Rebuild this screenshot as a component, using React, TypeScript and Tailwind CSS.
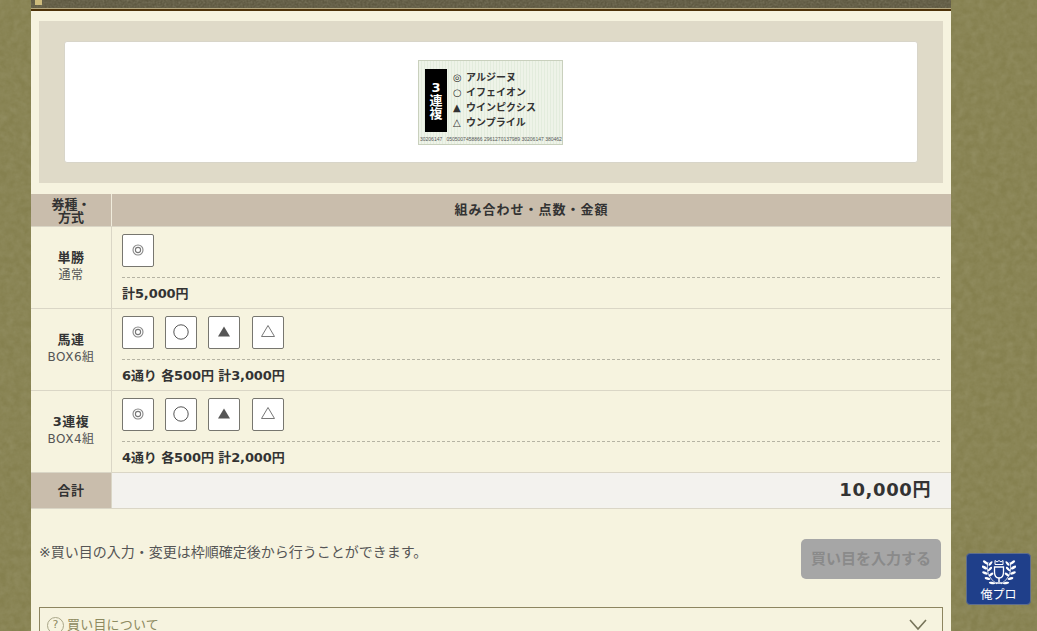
import React from "react";

const font = "font-['DejaVu_Sans','Noto_Sans_CJK_JP',sans-serif]";

const Mark = ({ type }: { type: string }) => {
  return (
    <div className="flex h-[33px] w-[32px] items-center justify-center rounded-[2px] border border-[#77766f] bg-white last:not-first:ml-[1px]">
      <svg width="20" height="20" viewBox="0 0 20 20" className="mb-[2px]">
        {type === "double" && (
          <>
            <circle cx="10" cy="10" r="5" fill="none" stroke="#888" strokeWidth="1.1" />
            <circle cx="10" cy="10" r="2.6" fill="none" stroke="#777" strokeWidth="1.1" />
          </>
        )}
        {type === "circle" && <circle cx="10" cy="10" r="7.2" fill="none" stroke="#555" strokeWidth="1" />}
        {type === "black" && <polygon points="10,4.5 16,14.5 4,14.5" fill="#555" />}
        {type === "tri" && <polygon points="10,3.5 16.5,14.5 3.5,14.5" fill="none" stroke="#777" strokeWidth="1" />}
      </svg>
    </div>
  );
};

const Row = ({ name, sub, marks, total }: { name: string; sub: string; marks: string[]; total: string }) => {
  return (
    <div className="flex h-[82px] border-b border-[#dad6c6]">
      <div className="flex w-[81px] shrink-0 flex-col items-center justify-center border-r border-[#dad6c6] pb-[6px]">
        <p className="text-[13px] leading-[20px] font-bold tracking-[0.5px] text-[#333]">{name}</p>
        <p className="text-[12px] leading-[14px] tracking-[0.5px] text-[#555]">{sub}</p>
      </div>
      <div className="flex-1 pt-[7px] pr-[11px] pl-[10px]">
        <div className="flex h-[44px] gap-[11px] border-b border-dashed border-[#b5b3a3]">
          {marks.map((m, i) => (
            <Mark key={i} type={m} />
          ))}
        </div>
        <p className="mt-[6px] text-[13px] leading-[20px] font-bold tracking-[-0.1px] text-[#333]">{total}</p>
      </div>
    </div>
  );
};

const Ticket = () => {
  const horses = [
    ["◎", "アルジーヌ"],
    ["○", "イフェイオン"],
    ["▲", "ウインピクシス"],
    ["△", "ウンプライル"],
  ];
  return (
    <div className="flex h-[85px] w-[145px] flex-col border border-[#c9d0bd] bg-[repeating-linear-gradient(90deg,#eef3e8_0px,#eef3e8_2px,#e3ecdd_2px,#e3ecdd_3px)] pt-[8px]">
      <div className="flex flex-1 pl-[6px]">
        <div className="flex h-[63px] w-[22px] flex-col items-center justify-center bg-black text-[13px] leading-[13px] font-bold text-white">
          <span>3</span>
          <span>連</span>
          <span>複</span>
        </div>
        <div className="ml-[6px] flex flex-col pt-[1px]">
          {horses.map(([m, n]) => (
            <div key={n} className="flex h-[15px] items-center text-[10px] font-bold whitespace-nowrap text-[#333]">
              <span className="w-[13px] text-[10px] font-normal">{m}</span>
              <span>{n}</span>
            </div>
          ))}
        </div>
      </div>
      <p className="pb-[1px] pl-[1px] font-['Liberation_Sans',sans-serif] text-[5px] leading-[7px] whitespace-nowrap text-[#555]">
        30206147 &nbsp; 0505007458866 2961270137989 30206147 380462
      </p>
    </div>
  );
};

const Leaves = () => {
  return (
    <g>
      <path d="M6 2c-2 8 0 16 9 22" fill="none" stroke="#fff" strokeWidth="0.8" />
      <ellipse cx="3.5" cy="2.5" rx="3" ry="1.3" fill="#fff" transform="rotate(35 3.5 2.5)" />
      <ellipse cx="8.5" cy="3.5" rx="2.8" ry="1.2" fill="#fff" transform="rotate(-50 8.5 3.5)" />
      <ellipse cx="2.5" cy="7.5" rx="3" ry="1.3" fill="#fff" transform="rotate(30 2.5 7.5)" />
      <ellipse cx="8" cy="9" rx="2.8" ry="1.2" fill="#fff" transform="rotate(-45 8 9)" />
      <ellipse cx="3" cy="13" rx="3" ry="1.3" fill="#fff" transform="rotate(20 3 13)" />
      <ellipse cx="9" cy="14.5" rx="2.8" ry="1.2" fill="#fff" transform="rotate(-35 9 14.5)" />
      <ellipse cx="5.5" cy="18.5" rx="3" ry="1.3" fill="#fff" transform="rotate(15 5.5 18.5)" />
      <ellipse cx="10" cy="23" rx="3.2" ry="1.2" fill="#fff" transform="rotate(10 10 23)" />
    </g>
  );
};

const Trophy = () => {
  return (
    <svg width="34" height="26" viewBox="0 0 34 26">
      <Leaves />
      <g transform="matrix(-1 0 0 1 34 0)">
        <Leaves />
      </g>
      <path d="M13 4.5V0.5l2 1.5 2-1.5 2 1.5 2-1.5v4z" fill="none" stroke="#fff" strokeWidth="1" />
      <path d="M12.5 7h9v5c0 4-2 6-4.5 6s-4.5-2-4.5-6z" fill="none" stroke="#fff" strokeWidth="1.3" />
      <path d="M17 18v4" stroke="#fff" strokeWidth="1.5" />
      <path d="M13.5 23h7" stroke="#fff" strokeWidth="1.5" />
    </svg>
  );
};

export default function App() {
  const all = ["double", "circle", "black", "tri"];
  return (
    <div className={`relative h-[631px] overflow-hidden bg-[#85804f] ${font}`}>
      <svg className="absolute inset-0 h-full w-full opacity-40">
        <filter id="bgnoise">
          <feTurbulence type="fractalNoise" baseFrequency="0.14" numOctaves="3" seed="4" />
          <feColorMatrix values="0 0 0 0 0.38  0 0 0 0 0.36  0 0 0 0 0.2  0.9 0.9 0 0 -0.55" />
        </filter>
        <rect width="100%" height="100%" filter="url(#bgnoise)" />
      </svg>
      <div className="relative ml-[31px] w-[920px]">
        <div className="relative h-[8px] overflow-hidden bg-[#5f5942]">
          <svg className="absolute inset-0 h-full w-full opacity-60">
            <filter id="stripnoise">
              <feTurbulence type="fractalNoise" baseFrequency="0.5" numOctaves="2" seed="9" />
              <feColorMatrix values="0 0 0 0 0.25  0 0 0 0 0.23  0 0 0 0 0.15  1 1 0 0 -0.7" />
            </filter>
            <rect width="100%" height="100%" filter="url(#stripnoise)" />
          </svg>
          <div className="absolute left-[4px] top-0 h-[5px] w-[7px] bg-[#cdbb7d]" />
        </div>
        <div className="h-[1px] bg-[#b5a77f]" />
        <div className="h-[2px] bg-[#4d3209]" />
        <div className="bg-[#f6f3df]">
          <div className="px-[8px] pt-[10px] pb-[11px]">
            <div className="h-[162px] bg-[#dfdac8] px-[25px] pt-[20px]">
              <div className="flex h-[122px] justify-center rounded-[3px] border border-[#d8d5c9] bg-white pt-[18px] pr-[1px]">
                <Ticket />
              </div>
            </div>
          </div>

          <div className="flex h-[33px] border-b border-[#dad6c6] bg-[#c9bdac] text-[#333]">
            <div className="flex w-[81px] shrink-0 items-center justify-center border-r border-[#f0ecdc] pt-[2px] text-center text-[13px] leading-[13px] font-bold">
              <span>
                券種・
                <br />
                方式
              </span>
            </div>
            <div className="flex flex-1 items-center justify-center text-[13px] font-bold tracking-[1px]">組み合わせ・点数・金額</div>
          </div>

          <Row name="単勝" sub="通常" marks={["double"]} total="計5,000円" />
          <Row name="馬連" sub="BOX6組" marks={all} total="6通り 各500円 計3,000円" />
          <Row name="3連複" sub="BOX4組" marks={all} total="4通り 各500円 計2,000円" />

          <div className="flex h-[36px] border-b border-[#dad6c6]">
            <div className="flex w-[81px] shrink-0 items-center justify-center border-r border-[#dad6c6] bg-[#c9bdac] text-[13px] font-bold tracking-[0.5px] text-[#333]">
              合計
            </div>
            <div className="flex flex-1 items-center justify-end bg-[#f3f2ee] pr-[20px] pb-[2px] text-[18px] font-bold tracking-[0.6px] text-[#333]">
              10,000円
            </div>
          </div>

          <div className="flex h-[98px] justify-between px-[8px] pt-[30px]">
            <p className="pt-[3px] text-[14px] leading-[20px] text-[#555]">※買い目の入力・変更は枠順確定後から行うことができます。</p>
            <div className="mr-[2px] flex h-[40px] w-[140px] items-center justify-center rounded-[5px] bg-[#a6a6a6] text-[15px] font-bold text-[#8a8a8a]">
              買い目を入力する
            </div>
          </div>

          <div className="px-[8px]">
            <div className="flex h-[60px] justify-between border border-[#8d8560] pt-[8px] pr-[15px] pl-[7px]">
              <div className="flex h-[18px] items-center gap-[3px] text-[13px] tracking-[0.2px] text-[#8d8a60]">
                <span className="flex h-[17px] w-[17px] items-center justify-center rounded-full border border-[#a9a688] text-[11px]">
                  ?
                </span>
                買い目について
              </div>
              <svg width="18" height="12" viewBox="0 0 18 12" className="mt-[3px]">
                <path d="M1 1 L9 10 L17 1" fill="none" stroke="#77745a" strokeWidth="1.6" />
              </svg>
            </div>
          </div>
        </div>
      </div>

      <div className="absolute left-[966px] top-[553px] flex h-[52px] w-[65px] flex-col items-center rounded-[4px] border border-[#5d6d8f] bg-[#1f3f8a] pt-[6px] text-white">
        <Trophy />
        <span className="mt-[2px] text-[12px] leading-[14px]">俺プロ</span>
      </div>
    </div>
  );
}
